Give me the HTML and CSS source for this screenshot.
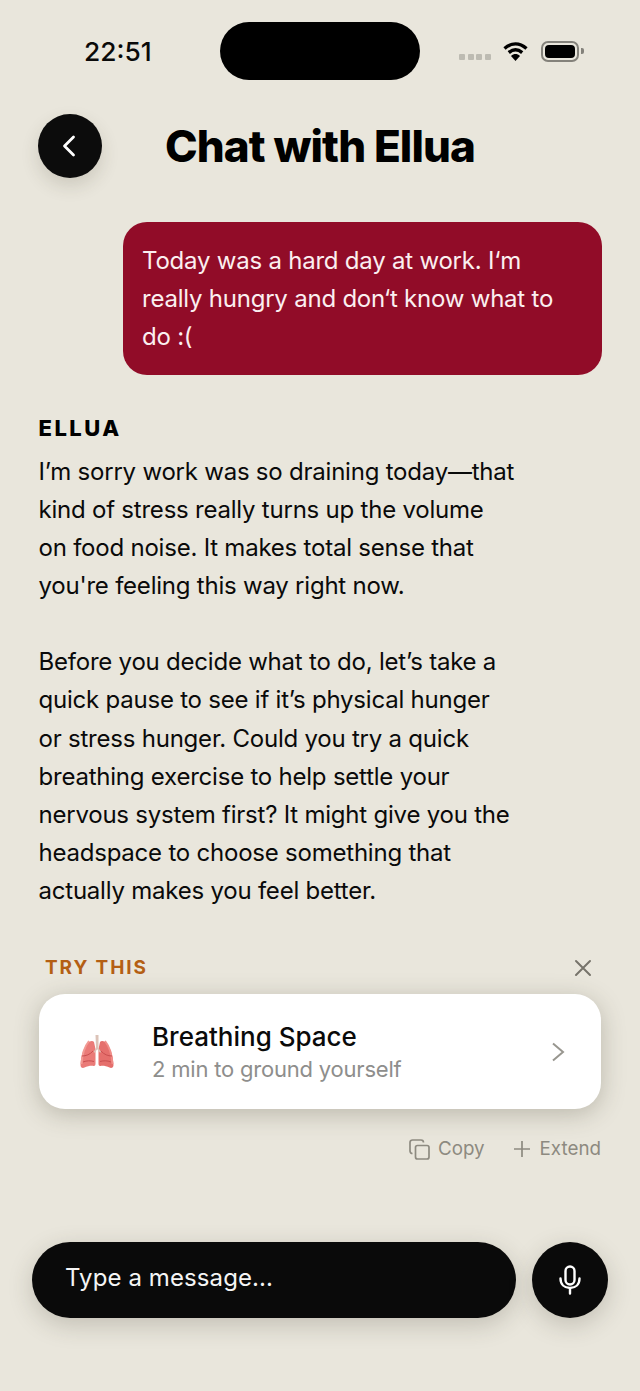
FILE: index.html
```html
<!DOCTYPE html>
<html lang="en">
<head>
  <meta charset="UTF-8">
  <title>Chat with Ellua</title>
  <link rel="stylesheet" href="styles.css">
</head>
<body>
  <div class="screen">
    <!-- Status bar -->
    <div class="status-bar">
      <span class="time">22:51</span>
      <div class="island"></div>
      <div class="status-icons">
        <div class="signal"><i></i><i></i><i></i><i></i></div>
        <svg class="wifi" width="27" height="21" viewBox="0 0 26 21">
          <path d="M2 7.500C9 1.500 17 1.500 24 7.500" fill="none" stroke="#000" stroke-width="3.400"/>
          <path d="M6.300 11.600C10.500 8 15.500 8 19.700 11.600" fill="none" stroke="#000" stroke-width="3.400"/>
          <path d="M8.500 15C11.500 12.400 14.500 12.400 17.500 15L13 20Z" fill="#000"/>
        </svg>
        <div class="battery"><div class="battery-fill"></div></div>
        <div class="battery-tip"></div>
      </div>
    </div>

    <!-- Header -->
    <header class="header">
      <button class="back-btn">
        <svg width="16" height="22" viewBox="0 0 16 22"><path d="M11.500 2L2.500 11l9 9" fill="none" stroke="#fff" stroke-width="2.800" stroke-linecap="round" stroke-linejoin="round"/></svg>
      </button>
      <h1 class="title">Chat with Ellua</h1>
    </header>

    <!-- Messages -->
    <div class="user-row">
      <div class="user-bubble">Today was a hard day at work. I‘m really hungry and don‘t know what to do :(</div>
    </div>

    <div class="reply">
      <div class="reply-name">ELLUA</div>
      <p class="reply-text">I’m sorry work was so draining today—that<br>kind of stress really turns up the volume<br>on food noise. It makes total sense that<br>you're feeling this way right now.</p>
      <p class="reply-text">Before you decide what to do, let’s take a<br>quick pause to see if it’s physical hunger<br>or stress hunger. Could you try a quick<br>breathing exercise to help settle your<br>nervous system first? It might give you the<br>headspace to choose something that<br>actually makes you feel better.</p>
    </div>

    <!-- Suggestion -->
    <div class="try-head">
      <span class="try-label">TRY THIS</span>
      <svg width="18" height="18" viewBox="0 0 18 18"><path d="M2 2l14 14M16 2L2 16" stroke="#77746b" stroke-width="2" stroke-linecap="round"/></svg>
    </div>
    <div class="card">
      <svg class="lungs" width="36" height="34" viewBox="0 0 36 34">
        <path d="M15 7c-1-1.500-3-1.500-5 0C5 11 2 20 1.500 30c0 2.500 2 3.500 4 2.500 3-1.500 7-2 9-1.500 1.500.3 2-1 2-2.500V14z" fill="#ea7b78"/>
        <path d="M21 7c1-1.500 3-1.500 5 0 5 4 8 13 8.500 23 0 2.500-2 3.500-4 2.500-3-1.500-7-2-9-1.500-1.500.3-2-1-2-2.500V14z" fill="#e56f6c"/>
        <path d="M10 6C6 11 3 20 2.500 29" fill="none" stroke="#f29a94" stroke-width="2"/>
        <path d="M26 6c4 5 7 14 7.500 23" fill="none" stroke="#f08d88" stroke-width="2"/>
        <path d="M3 21c4 0 8-1.500 11-5M4 27c4-1.500 7-1.500 11-.5M33 21c-4 0-8-1.500-11-5M32 27c-4-1.500-7-1.500-11-.5" fill="none" stroke="#c94f50" stroke-width="1"/>
        <path d="M16.500 0h3v13l2.500 4-1 .8-2.700-3.600-2.700 3.600-1-.8 2.400-4z" fill="#dcc3b8"/>
      </svg>
      <div class="card-text">
        <div class="card-title">Breathing Space</div>
        <div class="card-sub">2 min to ground yourself</div>
      </div>
      <svg width="14" height="20" viewBox="0 0 14 20"><path d="M2 1.500L12 10 2 18.500" fill="none" stroke="#98968f" stroke-width="2"/></svg>
    </div>

    <div class="actions">
      <span class="action">
        <svg class="action-icon" width="21" height="21" viewBox="0 0 21 21" fill="none" stroke="#8d8a80" stroke-width="1.700"><rect x="6.500" y="6.500" width="13.500" height="13.500" rx="2"/><path d="M3.500 14.500C2 14.500 1 13.500 1 12V3.500C1 2 2 1 3.500 1H12c1.500 0 2.500 1 2.500 2.500"/></svg>
        Copy
      </span>
      <span class="action">
        <svg width="16" height="16" viewBox="0 0 16 16"><path d="M8 0v16M0 8h16" stroke="#8d8a80" stroke-width="1.700"/></svg>
        Extend
      </span>
    </div>

    <!-- Input -->
    <div class="composer">
      <div class="input">Type a message...</div>
      <button class="mic-btn">
        <svg width="24" height="30" viewBox="0 0 24 30" fill="none" stroke="#fff" stroke-width="2.400" stroke-linecap="round"><rect x="7.500" y="1.500" width="9" height="18" rx="4.500"/><path d="M2.500 13.500c0 6 4 9.500 9.500 9.500s9.500-3.500 9.500-9.500M12 23v5.500"/></svg>
      </button>
    </div>
  </div>
</body>
</html>
```

FILE: styles.css
```css
* {
  box-sizing: border-box;
}
body {
  margin: 0;
  background: #e9e6dc;
  font-family: Inter, "Liberation Sans", sans-serif;
  color: #0a0a0a;
}
button {
  border: 0;
  padding: 0;
}
.screen {
  display: flex;
  flex-direction: column;
  width: 640px;
  height: 1391px;
  overflow: hidden;
}

/* status bar */
.status-bar {
  display: grid;
  grid-template-columns: 220px 200px 220px;
  align-items: center;
  padding-top: 22px;
  height: 80px;
}
.time {
  padding-left: 84px;
  font-size: 26.300px;
  font-weight: 500;
  color: #0a0a0a;
}
.island {
  height: 58px;
  background: #000;
  border-radius: 29px;
}
.status-icons {
  display: flex;
  align-items: center;
  padding-left: 39px;
}
.signal {
  display: flex;
  gap: 2.500px;
  margin-top: 11px;
}
.signal i {
  width: 6px;
  height: 6px;
  border-radius: 1px;
  background: #bdbbb2;
}
.wifi {
  margin-left: 11px;
}
.battery {
  width: 38px;
  height: 21px;
  margin-left: 12px;
  padding: 2px;
  border: 2px solid #84827b;
  border-radius: 7px;
}
.battery-fill {
  height: 100%;
  background: #000;
  border-radius: 4px;
}
.battery-tip {
  width: 3px;
  height: 6px;
  margin-left: 2px;
  background: #84827b;
  border-radius: 0 2px 2px 0;
}

/* header */
.header {
  display: grid;
  grid-template-columns: 64px 1fr 64px;
  align-items: center;
  margin-top: 34px;
  padding: 0 38px;
}
.back-btn {
  display: flex;
  align-items: center;
  justify-content: center;
  width: 64px;
  height: 64px;
  background: #0c0c0c;
  border-radius: 50%;
  box-shadow: 0 8px 18px rgba(60, 55, 40, 0.16);
}
.title {
  margin: 0;
  font-size: 44px;
  font-weight: 800;
  letter-spacing: -0.900px;
  line-height: 64px;
  text-align: center;
  color: #000;
}

/* messages */
.user-row {
  display: flex;
  justify-content: flex-end;
  margin-top: 44px;
  padding-right: 38px;
}
.user-bubble {
  width: 479px;
  padding: 20px 19px 19px 19px;
  background: #910c28;
  border-radius: 24px;
  color: #fbeff0;
  font-size: 24px;
  letter-spacing: -0.220px;
  line-height: 38px;
}
.reply {
  margin-top: 37px;
  padding: 0 38.500px;
}
.reply-name {
  font-size: 22px;
  font-weight: 800;
  letter-spacing: 2.500px;
  line-height: 32px;
  color: #000;
}
.reply-text {
  margin: 9px 0 0;
  font-size: 24px;
  letter-spacing: -0.220px;
  line-height: 38.100px;
}
.reply-text + .reply-text {
  margin-top: 38px;
}

/* suggestion */
.try-head {
  display: flex;
  align-items: center;
  justify-content: space-between;
  margin-top: 46px;
  padding: 0 48px 0 45px;
}
.try-label {
  font-size: 19px;
  font-weight: 700;
  letter-spacing: 1.900px;
  line-height: 24px;
  color: #b45f14;
}
.card {
  display: flex;
  align-items: center;
  height: 115px;
  margin: 14px 39px 0;
  padding: 0 36px 0 40px;
  background: #fff;
  border-radius: 26px;
  box-shadow: 0 5px 24px rgba(70, 65, 45, 0.28);
}
.lungs {
  flex: none;
}
.card-text {
  flex: 1;
  margin-left: 37px;
  padding-top: 2px;
}
.card-title {
  font-size: 26px;
  font-weight: 500;
  line-height: 32px;
  color: #0a0a0a;
}
.card-sub {
  font-size: 22px;
  letter-spacing: -0.200px;
  line-height: 32px;
  color: #8e8e8c;
}
.actions {
  display: flex;
  justify-content: flex-end;
  gap: 29px;
  margin-top: 27px;
  padding-right: 39px;
}
.action {
  display: flex;
  align-items: center;
  gap: 10px;
  font-size: 18.800px;
  line-height: 26px;
  color: #8d8a80;
}
.action-icon {
  margin-right: -2px;
}

/* input */
.composer {
  display: flex;
  gap: 16px;
  margin-top: 80px;
  padding: 0 32px;
}
.input {
  flex: 1;
  height: 76px;
  padding-left: 33px;
  background: #0a0a0a;
  border-radius: 38px;
  color: #f5f5f5;
  font-size: 24px;
  letter-spacing: 0.100px;
  line-height: 72px;
  box-shadow: 0 7px 24px rgba(60, 55, 40, 0.22);
}
.mic-btn {
  display: flex;
  align-items: center;
  justify-content: center;
  width: 76px;
  height: 76px;
  background: #0a0a0a;
  border-radius: 50%;
  box-shadow: 0 7px 24px rgba(60, 55, 40, 0.22);
}
```
